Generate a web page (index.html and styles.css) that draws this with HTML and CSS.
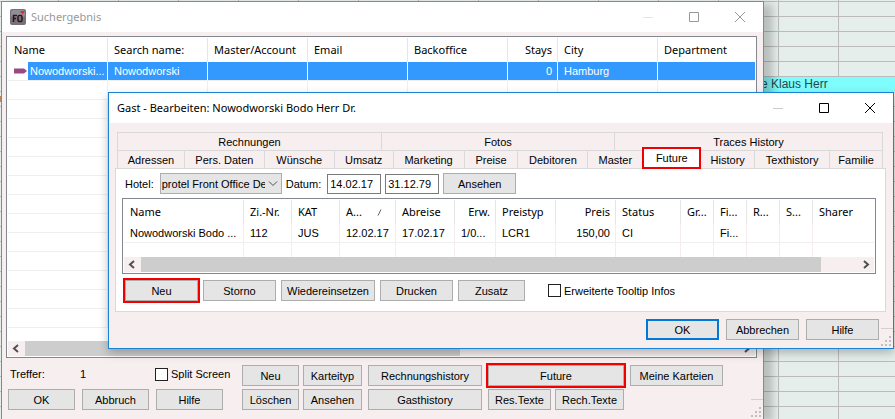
FILE: index.html
```html
<!DOCTYPE html>
<html lang="de">
<head>
  <meta charset="UTF-8" />
  <title>Suchergebnis</title>
  <link rel="stylesheet" href="styles.css">
</head>
<body>

  <div class="desktop">
    <div class="booking">e Klaus Herr</div>
    <div class="booking-left"></div>

    <!-- Search result -->
    <section class="window search-window">
      <header class="titlebar inactive">
        <svg class="app-icon" width="16" height="16" viewBox="0 0 16 16">
          <rect width="16" height="16" rx="2" fill="#77717a" />
          <rect x="1" y="1" width="14" height="7" rx="2" fill="#928c94" />
          <path d="M3.500 13V6.500H7M3.500 9.500H6" fill="none" stroke="#2b1518" stroke-width="1.500" />
          <rect x="8" y="6.500" width="4" height="6" rx="1.500" fill="none" stroke="#2b1518" stroke-width="1.500" />
          <path d="M10 2h5l-2.500 3.500z" fill="#f02030" />
        </svg>
        <h1>Suchergebnis</h1>
        <button class="win-btn faded" aria-label="Minimieren"><svg width="10" height="10" viewBox="0 0 10 10"><path d="M0 5.5H10" /></svg></button>
        <button class="win-btn" aria-label="Maximieren"><svg width="10" height="10" viewBox="0 0 10 10"><path d="M.5.5h9v9h-9z" /></svg></button>
        <button class="win-btn" aria-label="Schließen"><svg width="10" height="10" viewBox="0 0 10 10"><path d="M0 0L10 10M10 0L0 10" /></svg></button>
      </header>

      <div class="search-body">
        <div class="list result-list">
          <div class="list-rows">
            <table>
              <colgroup>
                <col class="w-100"><col class="w-100"><col class="w-100"><col class="w-100">
                <col class="w-100"><col class="w-50"><col class="w-100"><col>
              </colgroup>
              <thead>
                <tr>
                  <th>Name</th>
                  <th>Search name:</th>
                  <th>Master/Account</th>
                  <th>Email</th>
                  <th>Backoffice</th>
                  <th class="num">Stays</th>
                  <th>City</th>
                  <th>Department</th>
                </tr>
              </thead>
              <tbody>
                <tr class="selected">
                  <td class="marker"><svg width="13" height="6" viewBox="0 0 13 6"><path d="M0 0.5H10L13 3L10 5.500H0z" fill="#984a82" /></svg>Nowodworski...</td>
                  <td>Nowodworski</td>
                  <td></td>
                  <td></td>
                  <td></td>
                  <td class="num">0</td>
                  <td>Hamburg</td>
                  <td></td>
                </tr>
                <tr><td></td><td></td><td></td><td></td><td></td><td></td><td></td><td></td></tr>
                <tr><td></td><td></td><td></td><td></td><td></td><td></td><td></td><td></td></tr>
                <tr><td></td><td></td><td></td><td></td><td></td><td></td><td></td><td></td></tr>
                <tr><td></td><td></td><td></td><td></td><td></td><td></td><td></td><td></td></tr>
                <tr><td></td><td></td><td></td><td></td><td></td><td></td><td></td><td></td></tr>
                <tr><td></td><td></td><td></td><td></td><td></td><td></td><td></td><td></td></tr>
                <tr><td></td><td></td><td></td><td></td><td></td><td></td><td></td><td></td></tr>
                <tr><td></td><td></td><td></td><td></td><td></td><td></td><td></td><td></td></tr>
                <tr><td></td><td></td><td></td><td></td><td></td><td></td><td></td><td></td></tr>
                <tr><td></td><td></td><td></td><td></td><td></td><td></td><td></td><td></td></tr>
                <tr><td></td><td></td><td></td><td></td><td></td><td></td><td></td><td></td></tr>
                <tr><td></td><td></td><td></td><td></td><td></td><td></td><td></td><td></td></tr>
                <tr><td></td><td></td><td></td><td></td><td></td><td></td><td></td><td></td></tr>
              </tbody>
            </table>
          </div>
          <div class="scrollbar">
            <svg width="17" height="15" viewBox="0 0 17 15"><path d="M10 4L6 7.500L10 11" /></svg>
            <div class="track"><div class="thumb thumb-short"></div></div>
            <svg width="17" height="15" viewBox="0 0 17 15"><path d="M7 4L11 7.500L7 11" /></svg>
          </div>
        </div>

        <div class="search-footer">
          <div class="footer-left">
            <div class="hits">
              <span class="hits-label">Treffer:</span>
              <span class="hits-count">1</span>
              <input type="checkbox" id="split">
              <label for="split">Split Screen</label>
            </div>
            <div class="row">
              <button class="btn w-67">OK</button>
              <button class="btn w-67">Abbruch</button>
              <button class="btn w-67">Hilfe</button>
            </div>
          </div>
          <div class="btn-group two">
            <button class="btn">Neu</button>
            <button class="btn">Karteityp</button>
            <button class="btn">Löschen</button>
            <button class="btn">Ansehen</button>
          </div>
          <div class="btn-group history">
            <button class="btn">Rechnungshistory</button>
            <button class="btn">Gasthistory</button>
          </div>
          <div class="btn-group texts">
            <button class="btn wide marked">Future</button>
            <button class="btn">Res.Texte</button>
            <button class="btn">Rech.Texte</button>
          </div>
          <div class="btn-group cards">
            <button class="btn">Meine Karteien</button>
          </div>
        </div>
      </div>
      <svg class="grip" width="12" height="18" viewBox="0 0 12 18"><path class="grip-line" d="M0 .5H12" /><path d="M8 8h2v2h-2zM4 12h2v2h-2zM8 12h2v2h-2zM0 16h2v2h-2zM4 16h2v2h-2zM8 16h2v2h-2z" /></svg>
    </section>

    <!-- Guest dialog -->
    <section class="window guest-window">
      <header class="titlebar">
        <h2>Gast - Bearbeiten: Nowodworski Bodo Herr Dr.</h2>
        <button class="win-btn faded" aria-label="Minimieren"><svg width="10" height="10" viewBox="0 0 10 10"><path d="M0 5.5H10" /></svg></button>
        <button class="win-btn" aria-label="Maximieren"><svg width="10" height="10" viewBox="0 0 10 10"><path d="M.5.5h9v9h-9z" /></svg></button>
        <button class="win-btn" aria-label="Schließen"><svg width="10" height="10" viewBox="0 0 10 10"><path d="M0 0L10 10M10 0L0 10" /></svg></button>
      </header>

      <div class="guest-body">
        <nav class="tabs tabs-top">
          <button>Rechnungen</button>
          <button>Fotos</button>
          <button>Traces History</button>
        </nav>
        <nav class="tabs tabs-bottom">
          <button>Adressen</button>
          <button>Pers. Daten</button>
          <button>Wünsche</button>
          <button>Umsatz</button>
          <button>Marketing</button>
          <button>Preise</button>
          <button>Debitoren</button>
          <button>Master</button>
          <button class="active">Future</button>
          <button>History</button>
          <button>Texthistory</button>
          <button>Familie</button>
        </nav>

        <div class="pane">
          <div class="filter">
            <label for="hotel">Hotel:</label>
            <div class="select">
              <select id="hotel"><option>protel Front Office Demo</option></select>
              <svg width="10" height="6" viewBox="0 0 10 6"><path d="M1 .5L5 4.500L9 .5" /></svg>
            </div>
            <label for="from">Datum:</label>
            <input type="text" id="from" value="14.02.17">
            <input type="text" aria-label="Datum bis" value="31.12.79">
            <button class="btn w-73">Ansehen</button>
          </div>

          <div class="list stay-list">
            <div class="list-rows">
              <table>
                <colgroup>
                  <col class="w-120"><col class="w-48"><col class="w-48"><col class="w-56"><col class="w-59">
                  <col class="w-41"><col class="w-60"><col class="w-60"><col class="w-65">
                  <col class="w-33"><col class="w-33"><col class="w-33"><col class="w-33"><col>
                </colgroup>
                <thead>
                  <tr>
                    <th>Name</th>
                    <th>Zi.-Nr.</th>
                    <th>KAT</th>
                    <th class="sorted">A... <svg width="5" height="7" viewBox="0 0 5 7"><path d="M1 6.500L4 .5" /></svg></th>
                    <th>Abreise</th>
                    <th class="num">Erw.</th>
                    <th>Preistyp</th>
                    <th class="num">Preis</th>
                    <th>Status</th>
                    <th>Gr...</th>
                    <th>Fi...</th>
                    <th>R...</th>
                    <th>S...</th>
                    <th>Sharer</th>
                  </tr>
                </thead>
                <tbody>
                  <tr>
                    <td>Nowodworski Bodo ...</td>
                    <td>112</td>
                    <td>JUS</td>
                    <td>12.02.17</td>
                    <td>17.02.17</td>
                    <td>1/0...</td>
                    <td>LCR1</td>
                    <td class="num">150,00</td>
                    <td>CI</td>
                    <td></td>
                    <td>Fi...</td>
                    <td></td>
                    <td></td>
                    <td></td>
                  </tr>
                  <tr><td></td><td></td><td></td><td></td><td></td><td></td><td></td><td></td><td></td><td></td><td></td><td></td><td></td><td></td></tr>
                </tbody>
              </table>
            </div>
            <div class="scrollbar">
              <svg width="17" height="15" viewBox="0 0 17 15"><path d="M10 4L6 7.500L10 11" /></svg>
              <div class="track"><div class="thumb thumb-long"></div></div>
              <svg width="17" height="15" viewBox="0 0 17 15"><path d="M7 4L11 7.500L7 11" /></svg>
            </div>
          </div>

          <div class="actions">
            <button class="btn w-73 marked">Neu</button>
            <button class="btn w-73">Storno</button>
            <button class="btn w-94">Wiedereinsetzen</button>
            <button class="btn w-73">Drucken</button>
            <button class="btn w-67">Zusatz</button>
            <input type="checkbox" id="tooltip">
            <label for="tooltip">Erweiterte Tooltip Infos</label>
          </div>
        </div>

        <div class="dialog-buttons">
          <button class="btn w-73 default">OK</button>
          <button class="btn w-73">Abbrechen</button>
          <button class="btn w-73">Hilfe</button>
        </div>
      </div>
      <svg class="grip" width="12" height="18" viewBox="0 0 12 18"><path class="grip-line" d="M0 .5H12" /><path d="M8 8h2v2h-2zM4 12h2v2h-2zM8 12h2v2h-2zM0 16h2v2h-2zM4 16h2v2h-2zM8 16h2v2h-2z" /></svg>
    </section>
  </div>

</body>
</html>
```
FILE: styles.css
```css
* {
  box-sizing: border-box;
}

body {
  margin: 0;
  font-family: 'Liberation Sans', Arial, sans-serif;
  font-size: 11px;
  line-height: 14px;
  color: #000;
}

button,
input,
select {
  font: inherit;
  color: inherit;
  margin: 0;
}

/* room plan behind the windows */
.desktop {
  position: relative;
  height: 100vh;
  overflow: hidden;
  background-color: #e6eeec;
  background-image:
    linear-gradient(to right, #bbb 1px, transparent 1px),
    linear-gradient(to bottom, #bbb 1px, transparent 1px);
  background-size: 60px 15px;
  background-position: 58px 1px;
}

.booking {
  position: absolute;
  top: 77px;
  left: 761px;
  right: 0;
  height: 15px;
  background: #7ffcfc;
  color: #24484a;
  font-size: 12px;
}

.booking-left {
  position: absolute;
  top: 96px;
  left: 0;
  width: 2px;
  height: 6px;
  background: #b08a60;
}

.window {
  position: absolute;
  display: flex;
  flex-direction: column;
  background: #f7eeef;
}

.search-window {
  top: 1px;
  left: 1px;
  right: 131px;
  bottom: 0;
  border: 1px solid #888;
  border-bottom: none;
  box-shadow: 9px 3px 8px rgba(0, 0, 0, 0.2);
}

.guest-window {
  top: 92px;
  left: 108px;
  right: 1px;
  border: 1px solid #1883d7;
  box-shadow: 0 4px 9px rgba(0, 0, 0, 0.25);
}

.titlebar {
  display: flex;
  align-items: center;
  height: 30px;
  padding-left: 8px;
  background: #fff;
}

.titlebar h1,
.titlebar h2 {
  flex: 1;
  margin: 0;
  font-family: 'Noto Sans', 'Segoe UI', sans-serif;
  font-size: 11px;
  font-weight: normal;
  line-height: 16px;
}

.inactive {
  color: #999;
}

.app-icon {
  margin-right: 5px;
}

.win-btn {
  display: flex;
  align-items: center;
  justify-content: center;
  width: 46px;
  height: 30px;
  padding: 0;
  border: none;
  background: none;
}

.win-btn svg {
  fill: none;
  stroke: currentColor;
}

.win-btn.faded {
  color: #ccc;
}

.inactive .win-btn.faded {
  color: #dfe9e6;
}

/* lists */
.list {
  display: flex;
  flex-direction: column;
  border: 1px solid #828790;
  background: #fff;
  padding: 1px;
}

.list-rows {
  flex: 1;
  min-height: 0;
  overflow: hidden;
}

table {
  width: 100%;
  table-layout: fixed;
  border-collapse: separate;
  border-spacing: 0;
}

th, td {
  padding: 0 5px 0 6px;
  text-align: left;
  white-space: nowrap;
  overflow: hidden;
}

th {
  height: 24px;
  border-right: 1px solid #e5e5e5;
  font-family: 'Noto Sans', 'Segoe UI', sans-serif;
  font-size: 11px;
  font-weight: normal;
}

td {
  height: 19px;
  border-right: 1px solid #f5ecee;
  border-bottom: 1px solid #f2edef;
}

th:last-child,
td:last-child {
  border-right: none;
}

.num {
  text-align: right;
}

.selected td {
  background: #3399ff;
  border-right-color: #fff;
  color: #fff;
}

.selected .marker {
  background: linear-gradient(to right, #fff 20px, #3399ff 20px);
}

.marker svg {
  margin-right: 3px;
  vertical-align: 1px;
}

.sorted svg {
  margin-left: 12px;
  fill: none;
  stroke: #666;
}

.w-33 { width: 33px; }
.w-41 { width: 41px; }
.w-48 { width: 48px; }
.w-50 { width: 50px; }
.w-56 { width: 56px; }
.w-59 { width: 59px; }
.w-60 { width: 60px; }
.w-65 { width: 65px; }
.w-67 { width: 67px; }
.w-73 { width: 73px; }
.w-94 { width: 94px; }
.w-100 { width: 100px; }
.w-120 { width: 120px; }

.scrollbar {
  display: flex;
  height: 15px;
  background: #f7eeef;
}

.scrollbar svg {
  fill: none;
  stroke: #505050;
  stroke-width: 2;
}

.track {
  flex: 1;
}

.thumb {
  height: 100%;
  background: #cdcdcd;
}

.thumb-short {
  width: 61%;
}

.thumb-long {
  width: 95%;
}

/* controls */
.btn {
  height: 21px;
  padding: 0;
  border: 1px solid #adadad;
  background: #e5e5e5;
  text-align: center;
  white-space: nowrap;
}

.btn.default {
  border: 2px solid #0078d7;
}

.marked {
  outline: 2px solid #f00000;
  outline-offset: 0;
}

input[type="checkbox"] {
  appearance: none;
  width: 13px;
  height: 13px;
  border: 1px solid #222;
  background: #fff;
}

input[type="text"] {
  width: 54px;
  height: 20px;
  padding: 0 2px;
  border: 1px solid #7a7a7a;
  background: #fff;
}

.grip {
  position: absolute;
  right: 0;
  bottom: 2px;
  fill: #bfbfbf;
}

.grip-line {
  stroke: #d5cfd0;
}

/* search window */
.search-body {
  flex: 1;
  min-height: 0;
  display: flex;
  flex-direction: column;
  padding: 4px 6px 9px 4px;
}

.result-list {
  flex: 1;
  min-height: 0;
}

.search-footer {
  display: flex;
  gap: 6px;
  padding: 7px 0 0 2px;
}

.footer-left {
  display: flex;
  flex-direction: column;
  justify-content: space-between;
  width: 228px;
}

.row {
  display: flex;
  gap: 7px;
}

.hits {
  display: flex;
  align-items: center;
  height: 18px;
  padding-left: 2px;
}

.hits-label {
  width: 70px;
}

.hits-count {
  width: 75px;
}

.hits label {
  margin-left: 3px;
}

.btn-group {
  display: grid;
  gap: 3px 4px;
  align-content: start;
}

.two {
  grid-template-columns: 57px 59px;
}

.history {
  grid-template-columns: 114px;
}

.texts {
  grid-template-columns: 63px 69px;
}

.cards {
  grid-template-columns: 93px;
}

.wide {
  grid-column: span 2;
}

/* guest dialog */
.guest-body {
  padding: 9px 7px 8px 6px;
}

.tabs {
  display: grid;
  margin: 0 3px 0 2px;
  border-left: 1px solid #d9d9d9;
}

.tabs-top {
  grid-template-columns: 264fr 233fr 268fr;
}

.tabs-bottom {
  grid-template-columns: 67fr 80fr 70fr 59fr 71fr 54fr 70fr 55fr 58fr 54fr 75fr 53fr;
}

.tabs button {
  height: 18px;
  padding: 0;
  border: 1px solid #d9d9d9;
  border-width: 1px 1px 0 0;
  background: none;
  white-space: nowrap;
}

.tabs .active {
  z-index: 1;
  height: 22px;
  margin: -3px 0 -1px -1px;
  border: 2px solid #f00000;
  background: #fff;
}

.pane {
  padding: 4px 9px 10px 6px;
  border: 1px solid #d9d9d9;
  background: #fff;
}

.filter {
  display: flex;
  align-items: center;
  gap: 4px;
  padding-left: 3px;
}

.filter label {
  margin-right: 2px;
}

.select {
  display: flex;
  align-items: center;
  position: relative;
  width: 122px;
}

.select select {
  appearance: none;
  width: 100%;
  height: 21px;
  padding: 0 16px 0 1px;
  border: 1px solid #adadad;
  border-radius: 0;
  background: #e5e5e5;
}

.select svg {
  position: absolute;
  right: 4px;
  fill: none;
  stroke: #505050;
  pointer-events: none;
}

.stay-list {
  margin: 4px 0 6px;
  height: 76px;
}

.actions {
  display: flex;
  align-items: center;
  gap: 5px;
  padding-left: 3px;
}

.actions input {
  margin-left: 18px;
}

.actions label {
  margin-left: -2px;
}

.dialog-buttons {
  display: flex;
  justify-content: flex-end;
  gap: 7px;
  padding: 7px 7px 0 0;
}
```
